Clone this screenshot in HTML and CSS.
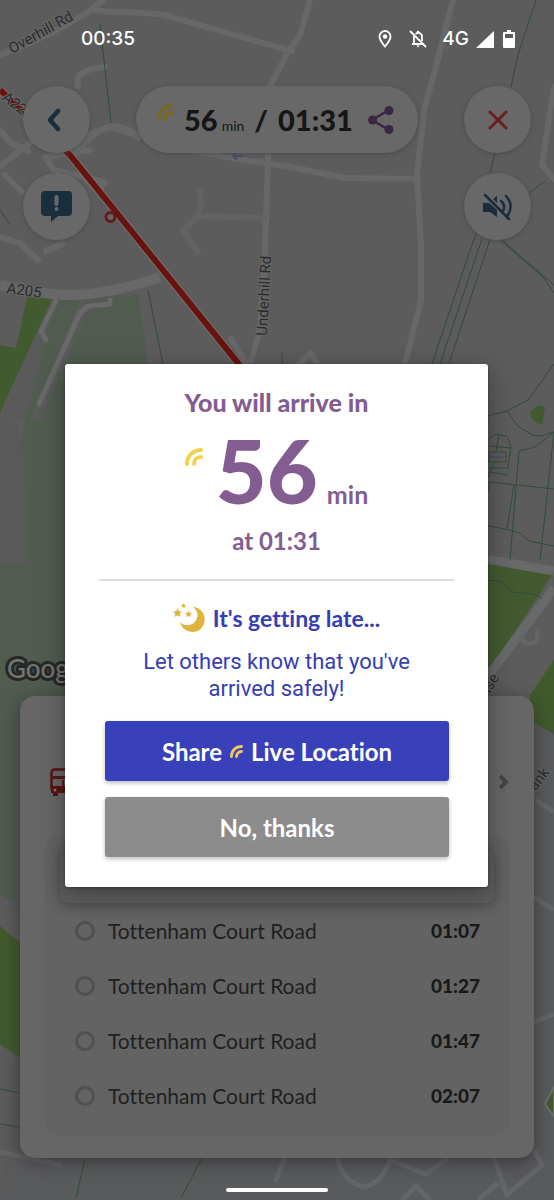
FILE: index.html
```html
<!DOCTYPE html>
<html lang="en">
<head>
<meta charset="utf-8">
<meta name="viewport" content="width=device-width, initial-scale=1">
<title>Live journey</title>
<link rel="stylesheet" href="styles.css">
</head>
<body>
<svg class="defs" aria-hidden="true">
  <symbol id="signal" viewBox="0 0 18 18"><path d="M2 16C2 8 8 2 16 2M9 16C9 12 12 9 16 9" fill="none" stroke="currentColor" stroke-width="4" stroke-linecap="round"/></symbol>
</svg>
<div class="screen">
  <svg class="map" viewBox="0 0 554 1200" preserveAspectRatio="xMidYMid slice" aria-hidden="true">
    <rect width="554" height="1200" fill="#5c5c5c"/>
    <path d="M0 890L25 930 0 1200H554V690L440 760Z" fill="#595a5c"/>
    <path d="M55 300L138 294 148 364H70V700H20V905L0 895V564L25 420Z" fill="#515b50"/>
    <path d="M54 300L25 420 0 415V425L48 298M80 300L30 420H40L90 305" fill="#5b5a5b"/>
    <path d="M0 564L0 415 18 425Q27 460 27 530V564Z" fill="#5a595a"/>
    <path d="M27 297L52 299 0 413V345L16 348Z" fill="#425a2f"/>
    <path d="M0 926L20 943V1058L0 1044Z" fill="#405a2c"/>
    <path d="M480 562L554 572 489 671H480Z" fill="#435a30"/>
    <path d="M554 660V734L530 720V695Z" fill="#415a2d"/>
    <path d="M554 1087L545 1104 554 1117Z" fill="#42592f" stroke="#6a6d67" stroke-width="2"/>
    <path d="M530 412Q540 402 545 407Q543 420 543 424Q531 424 530 412Z" fill="#435a30"/>
    <g fill="none" stroke="#666768" stroke-linecap="round" stroke-linejoin="round" stroke-width="6">
      <path d="M0 55Q48 38 88 12L103 0M93 10C120 14 145 10 168 16L277 47 292 51M310 0L300 35 288 52 268 90V160L264 275 260 330 250 364"/>
      <path d="M78 86V77Q86 68 105 67M0 166L55 124 70 140 110 127 137 135M45 157L54 170 105 182 98 191 82 176M0 130L11 143 28 151M5 175L22 192M45 157L90 150"/>
      <path d="M72 156Q98 127 114 126Q136 130 138 138M190 150L232 158 272 164 290 167 345 178 418 179M453 0L433 78 424 110 417 175 421 245 421 300 405 364"/>
      <path d="M200 192Q202 205 199 215L183 230 198 252M199 216L264 218" stroke="#616263"/>
      <path d="M0 237L20 243Q28 251 38 260M46 251L62 244"/>
      <path d="M554 87L542 165Q550 174 554 179M231 339L247 364M299 364L311 353 317 364"/>
    </g>
    <path d="M0 285Q40 294 66 295Q105 296 160 277" fill="none" stroke="#686869" stroke-width="10"/>
    <path d="M56 301L41 331 46 340M110 300V304L88 306 80 313 39 404" fill="none" stroke="#686968" stroke-width="5" stroke-linecap="round" stroke-linejoin="round"/>
    <path d="M480 558L554 571M554 588L489 675" fill="none" stroke="#686969" stroke-width="9"/>
    <path d="M524 630A8 8 0 1 0 536 631" fill="none" stroke="#646667" stroke-width="4"/>
    <g fill="none" stroke="#636567" stroke-width="5" stroke-linejoin="round">
      <path d="M534 897L554 910M534 1022L554 1014M536 800L554 812M0 1152L62 1165M285 1158L275 1182M338 1158Q340 1180 364 1187Q382 1183 390 1160L426 1174 448 1158M494 1158L508 1198M534 1150L542 1165 508 1194M478 1200L498 1183M402 1200L416 1186 430 1200"/>
    </g>
    <g fill="none" stroke="#304d38" stroke-width="1">
      <path d="M100 24L111 123M0 209L9 224M148 290L163 364M282 353V364M536 0L518 55 511 87M495 153L490 173M529 193L545 181M476 233L432 364M482 239L440 364M490 239L449 364M499 239L542 276 554 293M502 240L554 285"/>
      <path d="M554 364L528 400 507 411 488 416M507 411L518 426 532 435 541 436 554 432M554 432L535 447 519 451 510 560M554 432L540 560M489 439L495 434 507 436 511 447 508 468H489M499 435L496 451M490 446L511 448M489 452H506V462H489ZM494 462L487 480M489 472L508 475M480 481L554 489M490 483L485 500M514 485L507 528M480 525Q505 528 520 533L529 541 554 546M480 580L500 581 512 592 532 594 542 598"/>
      <path d="M0 1089L20 1093M0 1124L20 1127M85 1158L76 1198M202 1158L181 1198"/>
    </g>
    <path d="M0 90L70 155 242 368" fill="none" stroke="#777371" stroke-width="8"/>
    <path d="M0 90L70 155 242 368" fill="none" stroke="#67140f" stroke-width="6"/>
    <circle cx="110.500" cy="217" r="4.500" fill="#666" stroke="#641a18" stroke-width="3"/>
    <path d="M243 156H233M237 152L233 156 237 160M490 457H503" stroke="#4b4d66" stroke-width="2" fill="none"/>
    <g class="map-label">
      <text transform="translate(12 54) rotate(-29)">Overhill Rd</text>
      <text transform="translate(1 99) rotate(38)">A22</text>
      <text transform="translate(6 293) rotate(8)">A205</text>
      <text transform="translate(267 336) rotate(-87)">Underhill Rd</text>
      <text transform="translate(490 694) rotate(-60)">ise</text>
      <text transform="translate(530 799) rotate(-53)">Bank</text>
    </g>
    <text x="7" y="678" class="map-logo">Google</text>
  </svg>

  <header class="status">
    <span>00:35</span>
    <span class="status-icons">
      <svg width="14" height="18" viewBox="0 0 14 18"><path d="M7 1A5.500 5.500 0 0 1 12.500 6.500C12.500 10 7 16.500 7 16.500S1.500 10 1.500 6.500A5.500 5.500 0 0 1 7 1Z" fill="none" stroke="#fff" stroke-width="1.800"/><circle cx="7" cy="6.500" r="2.300" fill="#fff"/></svg>
      <svg class="bell" width="18" height="18" viewBox="0 0 18 18"><path d="M3 14H14.500M5 14V6M6.500 4Q9.500 1.500 12 4Q13 5 13 7V11M1 1L17 17" fill="none" stroke="#fff" stroke-width="1.800"/><circle cx="9" cy="2" r="1.300" fill="#fff"/><path d="M7.500 15.500H10.500L9 17.500Z" fill="#fff"/></svg>
      <span>4G</span>
      <svg class="bars" width="18" height="17" viewBox="0 0 18 17"><path d="M0 17L18 0V17Z" fill="#fff"/></svg>
      <svg class="battery" width="12" height="18" viewBox="0 0 12 18"><path d="M4 0H8V2H11Q12 2 12 3V17Q12 18 11 18H1Q0 18 0 17V3Q0 2 1 2H4Z" fill="#fff"/><path d="M2 4H10V8H2Z" fill="#5c5c5c"/></svg>
    </span>
  </header>

  <div class="tools">
    <button class="round" aria-label="Back"><svg width="20" height="24" viewBox="0 0 20 24"><path d="M11 3L3 12 11 21" fill="none" stroke="#16303f" stroke-width="4.500" stroke-linecap="round" stroke-linejoin="round"/></svg></button>
    <button class="eta" aria-label="Share arrival time">
      <svg class="eta-signal" width="17" height="17"><use href="#signal"/></svg>
      <span class="eta-num">56</span><span class="eta-min">min</span><span class="eta-slash">/</span><span class="eta-num">01:31</span>
      <svg class="eta-share" width="26" height="28" viewBox="0 0 26 28"><path d="M21 4L4 14 21 24" fill="none" stroke="#3a2741" stroke-width="2.500"/><g fill="#3a2741"><circle cx="21" cy="4.500" r="4.500"/><circle cx="4.500" cy="14" r="4.500"/><circle cx="21" cy="23.500" r="4.500"/></g></svg>
    </button>
    <button class="round" aria-label="Close"><svg width="20" height="20" viewBox="0 0 20 20"><path d="M2 2L18 18M18 2L2 18" stroke="#6e1d1e" stroke-width="3" stroke-linecap="round"/></svg></button>
  </div>
  <div class="tools">
    <button class="round" aria-label="Report a problem"><svg width="32" height="32" viewBox="0 0 32 32"><path d="M4 0H28Q31 0 31 4V21Q31 25 27 25H17L10 31V25H4Q0 25 0 21V4Q0 0 4 0Z" fill="#192f3e"/><path d="M15.500 6V13" stroke="#686868" stroke-width="4" stroke-linecap="round"/><circle cx="15.500" cy="18" r="2" fill="#686868"/></svg></button>
    <button class="round" aria-label="Unmute"><svg width="30" height="26" viewBox="0 0 30 26"><g fill="#1b2c3c"><path d="M0 9H6L14 16V23L7 18H0ZM10 5L14 2V9Z"/></g><path d="M18 7Q23 11 20 17M23 2Q31 11 25 21M2 1L26 25" fill="none" stroke="#1b2c3c" stroke-width="2.500" stroke-linecap="round"/></svg></button>
  </div>

  <section class="sheet">
    <div class="sheet-head">
      <svg width="34" height="28" viewBox="0 0 34 28"><rect x="1.500" y="1.500" width="31" height="22" rx="3" fill="none" stroke="#5a1513" stroke-width="2.500"/><path d="M1 8H33V11H1ZM1 18H33V25H1ZM3 24H8V28H3ZM24 24H29V28H24Z" fill="#5a1513"/><path d="M13 12V18" stroke="#5a1513" stroke-width="2"/><circle cx="5" cy="22" r="1.500" fill="#777"/></svg>
      <svg width="10" height="16" viewBox="0 0 10 16"><path d="M1 2L7 8 1 14" fill="none" stroke="#454545" stroke-width="4"/></svg>
    </div>
    <div class="stops">
      <div class="selected"></div>
      <label class="stop"><input type="radio" name="dep"><span>Tottenham Court Road</span><time>01:07</time></label>
      <label class="stop"><input type="radio" name="dep"><span>Tottenham Court Road</span><time>01:27</time></label>
      <label class="stop"><input type="radio" name="dep"><span>Tottenham Court Road</span><time>01:47</time></label>
      <label class="stop"><input type="radio" name="dep"><span>Tottenham Court Road</span><time>02:07</time></label>
    </div>
  </section>
  <div class="home-bar"></div>

  <div class="overlay">
    <section class="dialog" role="dialog" aria-labelledby="arrive">
      <h1 class="title heading" id="arrive">You will arrive in</h1>
      <p class="minutes"><svg class="big-signal" width="18" height="18"><use href="#signal"/></svg><strong>56</strong><span>min</span></p>
      <p class="title">at 01:31</p>
      <hr class="rule">
      <h2 class="late"><svg width="32" height="30" viewBox="0 0 32 30"><path d="M20 4A12.500 12.500 0 1 1 7 19A10 10 0 1 0 20 4Z" fill="#dfb43c"/><g fill="#dfb43c"><path d="M4.500 5L6 8.200 9.200 8.500 6.800 10.800 7.500 14 4.500 12.300 1.500 14 2.200 10.800 0 8.500 3.200 8.200Z"/><path d="M10.500 0L11.300 1.700 13 2 11.800 3.200 12 5 10.500 4 9 5 9.200 3.200 8 2 9.700 1.700Z"/><path d="M15.500 7.500L16.500 9.800 19 10 17.200 11.700 17.700 14 15.500 12.900 13.300 14 13.800 11.700 12 10 14.500 9.800Z"/></g></svg><span>It's getting late...</span></h2>
      <p class="note">Let others know that you've arrived safely!</p>
      <div class="actions">
        <button class="btn primary"><span>Share</span><svg width="13" height="13"><use href="#signal"/></svg><span>Live Location</span></button>
        <button class="btn">No, thanks</button>
      </div>
    </section>
  </div>
</div>
</body>
</html>
```
FILE: styles.css
```css
* { box-sizing: border-box; }
body { margin: 0; font-family: Lato, "Open Sans", sans-serif; font-variant-ligatures: none; color: #161616; }
h1, h2, p { margin: 0; }
button { border: 0; padding: 0; font: inherit; font-variant-ligatures: none; color: inherit; }
.defs { position: absolute; width: 0; height: 0; }

.screen { position: relative; min-height: 100vh; display: flex; flex-direction: column; overflow: hidden; background: #5c5c5c; }
.map { position: absolute; inset: 0; width: 100%; height: 100%; }
.map-label { font: 15px Roboto, sans-serif; fill: #2b2c2d; stroke: #666; stroke-width: 2px; paint-order: stroke; }
.map-logo { font: 500 26px Lato, sans-serif; fill: #737573; stroke: #252825; stroke-width: 6px; stroke-linejoin: round; paint-order: stroke; }
.status, .tools, .sheet, .home-bar { position: relative; }

.status { height: 78px; padding: 0 39px 0 81px; display: flex; align-items: center; justify-content: space-between; color: #fff; font: 500 19px/24px Inter, Roboto, sans-serif; }
.status-icons { display: flex; align-items: center; }
.bell { margin: 0 15px 0 17px; }
.bars { margin: 0 9px 0 7px; }

.tools { display: flex; justify-content: space-between; padding: 8px 23px 12px; }
.round { width: 67px; height: 67px; border-radius: 50%; background: #686868; display: grid; place-items: center; box-shadow: 0 1px 4px #444a; }
.eta { height: 67px; width: 282px; border-radius: 34px; padding: 0 24px 0 21px; background: #686868; display: flex; align-items: baseline; line-height: 67px; box-shadow: 0 1px 4px #444a; }
.eta-signal { color: #776826; align-self: flex-start; margin: 18px 10px 0 0; }
.eta-num { font-size: 29px; font-weight: 900; }
.eta-min { font-size: 14px; margin: 0 10px 0 4px; }
.eta-slash { font-size: 29px; font-weight: 900; margin-right: 10px; }
.eta-share { align-self: center; margin-left: auto; }

.sheet { margin: auto 20px 0; padding: 0 25px 23px; border-radius: 15px; background: #666; box-shadow: 0 4px 18px #2229; }
.sheet-head { height: 140px; padding: 32px 0 0 5px; display: flex; align-items: center; justify-content: space-between; }
.stops { border: 1px solid #606060; border-radius: 15px; background: #636363; padding: 11px 14px 11px; }
.selected { height: 55px; border-radius: 8px; background: #5d5d5d; box-shadow: 0 3px 12px #3338; }
.stop { height: 55px; padding: 0 14px 0 15px; display: flex; align-items: center; font-size: 21px; color: #202020; }
.stop input { appearance: none; width: 20px; height: 20px; margin: 0 13px 0 0; border: 3px solid #505050; border-radius: 50%; }
.stop span { flex: 1; }
.stop time { font-size: 19px; font-weight: 900; color: #191919; }
.home-bar { width: 102px; height: 4px; border-radius: 2px; background: #fff; margin: 30px auto 8px; }

.overlay { position: absolute; inset: 0; padding: 51px 66px 0 65px; display: flex; align-items: center; justify-content: center; }
.dialog { width: 100%; max-width: 480px; background: #fff; border-radius: 3px; padding: 22px 34px 30px; text-align: center; box-shadow: 0 6px 26px #0005, 0 1px 3px #0005; }
.title { font-size: 24px; line-height: 32px; font-weight: 700; color: #835d91; }
.heading { font-size: 25px; font-weight: 900; }
.minutes { display: flex; justify-content: center; align-items: baseline; height: 107px; padding-top: 8px; color: #835d91; line-height: 32px; font-size: 25px; font-weight: 700; }
.minutes strong { font-size: 88px; line-height: 88px; font-weight: 900; margin: 0 9px 0 13px; }
.big-signal { color: #efd453; align-self: flex-start; margin-top: 22px; }
.rule { margin: 22px 0 20px; border: 0; height: 2px; background: #ddd; }
.late { display: flex; justify-content: center; gap: 8px; align-items: center; height: 34px; font-size: 23px; font-weight: 700; color: #353db5; }
.note { font: 22px/27px Roboto, sans-serif; color: #353db5; margin: 13px 24px 19px; }
.actions { display: grid; gap: 16px; padding: 0 5px 0 6px; }
.btn { height: 60px; border-radius: 3px; background: #8c8c8c; color: #fff; font-size: 24px; font-weight: 700; display: flex; align-items: center; justify-content: center; gap: 8px; box-shadow: 0 2px 4px #0004; }
.primary { background: #3841b9; }
.primary svg { color: #f0c75c; }
```
